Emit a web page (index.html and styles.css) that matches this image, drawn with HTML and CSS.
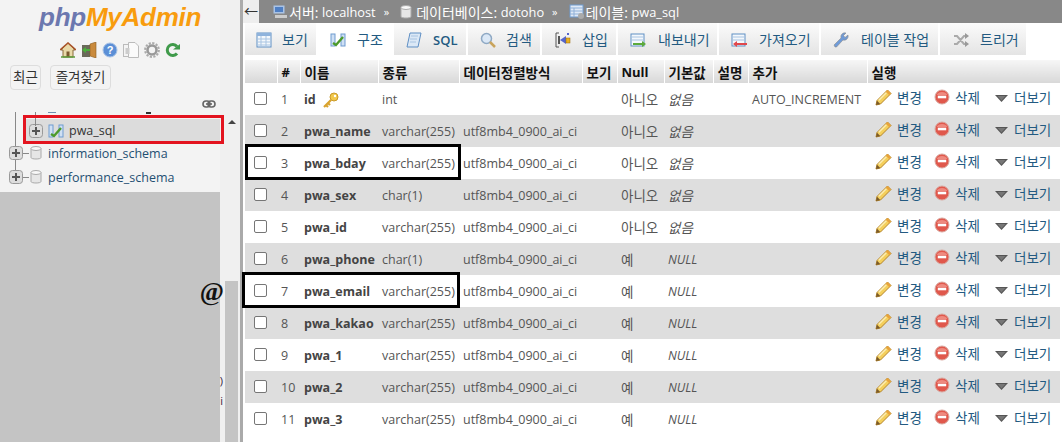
FILE: index.html
```html
<!DOCTYPE html>
<html lang="ko">
<head>
<meta charset="utf-8">
<title>phpMyAdmin</title>
<link rel="stylesheet" href="styles.css">
</head>
<body>
<svg class="defs" width="0" height="0">
  <defs>
    <symbol id="i-pencil" viewBox="0 0 17 17">
      <path d="M12.500 1 16 4.500 5.500 15 1 16 2 11.500Z" fill="#f4cf5c" stroke="#b5852a" stroke-width="1"/>
      <path d="M12.500 1 16 4.500 14.300 6.200 10.800 2.700Z" fill="#e8a33c"/>
      <path d="M3.800 11.200 11.300 3.800" stroke="#fcedb0" stroke-width="1.600"/>
      <path d="M2 11.800 1 16 5.200 15Z" fill="#7a5a2a"/>
    </symbol>
    <symbol id="i-del" viewBox="0 0 16 16">
      <circle cx="8" cy="8" r="7" fill="#e0584c" stroke="#d9a8a0" stroke-width="1"/>
      <path d="M2.500 6a6 5 0 0 1 11 0Z" fill="#ee8a7f"/>
      <rect x="3.800" y="6.700" width="8.400" height="2.600" fill="#fff"/>
    </symbol>
    <symbol id="i-more" viewBox="0 0 13 7">
      <path d="M0 0H13L6.500 7Z" fill="#555"/>
      <path d="M2.500 1H10.500L6.500 5.500Z" fill="#777"/>
    </symbol>
    <symbol id="i-plus" viewBox="0 0 14 14">
      <rect x=".5" y=".5" width="13" height="13" rx="3" fill="#ddd" stroke="#999"/>
      <path d="M3 7H11M7 3V11" stroke="#555" stroke-width="2"/>
    </symbol>
    <symbol id="i-db" viewBox="0 0 12 14">
      <path d="M1 2.500V11.500C1 13.500 11 13.500 11 11.500V2.500Z" fill="#e6e6e6" stroke="#aaa"/>
      <ellipse cx="6" cy="2.500" rx="5" ry="2" fill="#f8f8f8" stroke="#aaa"/>
    </symbol>
    <symbol id="i-struct" viewBox="0 0 16 16">
      <rect x="1" y="2" width="4" height="12" fill="#cfe0f4" stroke="#6f9bd0"/>
      <rect x="11" y="2" width="4" height="12" fill="#cfe0f4" stroke="#6f9bd0"/>
      <path d="M3 11 6 13 13 5" fill="none" stroke="#4c9a2a" stroke-width="2.400"/>
    </symbol>
  </defs>
</svg>

<div class="app">
  <aside class="side">
    <div class="panel">
      <div class="logo"><span class="php">php</span><span class="mya">MyAdmin</span></div>
      <div class="quick">
        <svg class="qi" viewBox="0 0 16 16"><path d="M8 1 1 8H3V15H13V8H15Z" fill="#e8d9a8" stroke="#8a6a3a"/><path d="M0 8 8 1 16 8" fill="none" stroke="#a9542a" stroke-width="1.600"/><rect x="6.500" y="9.500" width="3" height="5.500" fill="#7a5a30"/><path d="M1 15H15" stroke="#5a9a3a" stroke-width="1.500"/></svg>
        <svg class="qi" viewBox="0 0 16 16"><rect x="1" y="3" width="8" height="12" fill="#6a6a5a"/><path d="M9 2 15 0V16L9 14Z" fill="#c98a3c" stroke="#8a5a20" stroke-width=".6"/><path d="M1 8 5 5V7H9V9H5V11Z" fill="#4caf3c"/></svg>
        <svg class="qi" viewBox="0 0 16 16"><circle cx="8" cy="8" r="7" fill="#5b8fd6" stroke="#a9c3e6"/><text x="8" y="12" class="qmark">?</text></svg>
        <svg class="qi" viewBox="0 0 16 16"><rect x=".5" y="2.500" width="9" height="12" fill="#f4f4f4" stroke="#bbb"/><path d="M5.500 .5H12L15.500 4V15.500H5.500Z" fill="#fafafa" stroke="#bbb"/><rect x="2.500" y="6" width="4" height="6" fill="#ccc"/></svg>
        <svg class="qi" viewBox="0 0 16 16"><circle cx="8" cy="8" r="4.500" fill="none" stroke="#999" stroke-width="2.600"/><circle cx="8" cy="8" r="6.800" fill="none" stroke="#aaa" stroke-width="2.200" stroke-dasharray="2.200 1.360"/></svg>
        <svg class="qi" viewBox="0 0 16 16"><path d="M12 4.500A5.500 5.500 0 1 0 12 11.500" fill="none" stroke="#3f9a4a" stroke-width="3"/><path d="M8 7.500H15V2Z" fill="#3f9a4a"/></svg>
      </div>
      <div class="btns"><span class="btn btn-a">최근</span><span class="btn btn-b">즐겨찾기</span></div>
      <div class="link-row">
        <svg class="link" viewBox="0 0 14 8"><rect x="1" y="1" width="7" height="6" rx="3" fill="none" stroke="#666" stroke-width="1.600"/><rect x="6" y="1" width="7" height="6" rx="3" fill="none" stroke="#666" stroke-width="1.600"/><path d="M4 4H10" stroke="#666" stroke-width="1.600"/></svg>
      </div>
      <div class="tree-wrap">
        <ul class="tree">
          <li class="clip"><span class="clip-a"></span><span class="clip-b"></span></li>
          <li class="node node-sel">
            <svg class="plus" width="14" height="14"><use href="#i-plus"/></svg>
            <svg class="dbi" width="16" height="16"><use href="#i-struct"/></svg>
            <span>pwa_sql</span>
          </li>
          <li class="node node-db node-first">
            <svg class="plus" width="14" height="14"><use href="#i-plus"/></svg>
            <svg class="dbi" width="12" height="14"><use href="#i-db"/></svg>
            <span>information_schema</span>
          </li>
          <li class="node node-db">
            <svg class="plus" width="14" height="14"><use href="#i-plus"/></svg>
            <svg class="dbi" width="12" height="14"><use href="#i-db"/></svg>
            <span>performance_schema</span>
          </li>
        </ul>
      </div>
    </div>
    <div class="gray">
      <span class="at">@</span>
      <span class="frag frag1">)</span>
      <span class="frag frag2">i</span>
    </div>
    <div class="arrow-up"></div>
    <div class="redbox"></div>
  </aside>
  <div class="scroll"><div class="thumb"></div></div>

  <main class="main">
    <nav class="crumb">
      <span class="back">←</span>
      <span class="crumb-item"><svg class="ci" viewBox="0 0 16 16"><rect x="1" y="1" width="12" height="9" fill="#a9c3e6" stroke="#888"/><rect x="3" y="3" width="8" height="5" fill="#4f7fc4"/><rect x="3" y="11" width="12" height="3" fill="#ccc"/></svg>서버:&nbsp;<span class="lt">localhost</span></span>
      <span class="sep">»</span>
      <span class="crumb-item"><svg class="ci ci-db" width="12" height="14"><use href="#i-db"/></svg>데이터베이스:&nbsp;<span class="lt">dotoho</span></span>
      <span class="sep">»</span>
      <span class="crumb-item"><svg class="ci" viewBox="0 0 16 16"><rect x="1" y="1" width="13" height="12" fill="#dfe9f6" stroke="#6f9bd0"/><path d="M1 4H14M1 7H14M1 10H14M5 4V13" stroke="#8fb0d8"/><circle cx="12" cy="12" r="3" fill="#aaa"/></svg>테이블:&nbsp;<span class="lt">pwa_sql</span></span>
    </nav>
    <div class="tabs">
      <a class="tab t1"><svg class="ti" viewBox="0 0 16 16"><rect x="1" y="1" width="14" height="14" fill="#f4f8fc" stroke="#5f8fc4"/><rect x="1" y="1" width="14" height="3" fill="#8fb3dc"/><path d="M1 7H15M1 10H15M1 13H15M5 4V15M10 4V15" stroke="#a8c4e2"/></svg>보기</a>
      <a class="tab t2 active"><svg class="ti" width="16" height="16"><use href="#i-struct"/></svg>구조</a>
      <a class="tab t3"><svg class="ti" viewBox="0 0 16 16"><path d="M4 1H15L12 15H1Z" fill="#dbe8f6" stroke="#5f8fc4"/><path d="M5 4H12M4 7H11M4 10H10" stroke="#a8c4e2"/></svg><b>SQL</b></a>
      <a class="tab t4"><svg class="ti" viewBox="0 0 16 16"><circle cx="6.500" cy="6.500" r="5" fill="#dbe8f6" stroke="#8fa9c4" stroke-width="1.500"/><path d="M10 10 15 15" stroke="#c9a45c" stroke-width="2.500"/></svg>검색</a>
      <a class="tab t5"><svg class="ti" viewBox="0 0 16 16"><path d="M4 1H1V15H4" fill="none" stroke="#555"/><rect x="3" y="4" width="2" height="8" fill="#555"/><path d="M5 8 11 4V12Z" fill="#5566cc"/><rect x="11" y="6" width="4" height="5" fill="#e8b020" stroke="#996600" stroke-width=".5"/><rect x="12" y="1" width="2" height="2" fill="#5566cc"/></svg>삽입</a>
      <a class="tab t6"><svg class="ti" viewBox="0 0 16 16"><rect x="1" y="2" width="13" height="12" fill="#f4f8fc" stroke="#5f8fc4"/><path d="M1 5H14M1 8H14" stroke="#a8c4e2"/><path d="M3 11H12V9L16 12 12 15V13H3Z" fill="#5caa3c"/></svg>내보내기</a>
      <a class="tab t7"><svg class="ti" viewBox="0 0 16 16"><rect x="1" y="2" width="13" height="12" fill="#f4f8fc" stroke="#5f8fc4"/><path d="M1 5H14M1 8H14" stroke="#a8c4e2"/><path d="M16 11H6V9L2 12 6 15V13H16Z" fill="#e0484c"/></svg>가져오기</a>
      <a class="tab t8"><svg class="ti" viewBox="0 0 16 16"><path d="M2 15 1 13 8 6A4 4 0 0 1 13 1L10.500 3.500 12 5.500 15 3A4 4 0 0 1 10 8L3.500 15Z" fill="#6f9bd8" stroke="#8a8a8a" stroke-width=".6"/></svg>테이블 작업</a>
      <a class="tab t9"><svg class="ti" viewBox="0 0 16 16"><path d="M1 4H4L11 12H14M1 12H4L11 4H14" fill="none" stroke="#aaa" stroke-width="2"/><path d="M12 1 16 4 12 7ZM12 9 16 12 12 15Z" fill="#999"/></svg>트리거</a>
    </div>

    <table class="grid">
      <colgroup>
        <col class="c-check"><col class="c-num"><col class="c-name"><col class="c-type"><col class="c-coll"><col class="c-view"><col class="c-null"><col class="c-def"><col class="c-desc"><col class="c-extra"><col class="c-act">
      </colgroup>
      <thead>
        <tr><th></th><th class="lat">#</th><th>이름</th><th>종류</th><th>데이터정렬방식</th><th>보기</th><th class="lat">Null</th><th>기본값</th><th>설명</th><th>추가</th><th>실행</th></tr>
      </thead>
      <tbody>
        <tr><td><span class="cb"></span></td><td class="n">1</td><td class="nm">id <svg class="key" viewBox="0 0 16 16"><circle cx="11" cy="5" r="4" fill="#f2c84b" stroke="#c99a2a"/><circle cx="12" cy="4" r="1.200" fill="#fff"/><path d="M8 8 1 15M3 13 5 15M5 11 7 13" stroke="#d9a32e" stroke-width="2.200"/></svg></td><td>int</td><td></td><td></td><td class="ko">아니오</td><td class="i ko">없음</td><td></td><td>AUTO_INCREMENT</td><td class="act"><span class="a a1"><svg class="ai" width="17" height="17"><use href="#i-pencil"/></svg>변경</span><span class="a a2"><svg class="ad" width="16" height="16"><use href="#i-del"/></svg>삭제</span><span class="a"><svg class="am" width="13" height="7"><use href="#i-more"/></svg>더보기</span></td></tr>
        <tr><td><span class="cb"></span></td><td class="n">2</td><td class="nm">pwa_name</td><td>varchar(255)</td><td>utf8mb4_0900_ai_ci</td><td></td><td class="ko">아니오</td><td class="i ko">없음</td><td></td><td></td><td class="act"><span class="a a1"><svg class="ai" width="17" height="17"><use href="#i-pencil"/></svg>변경</span><span class="a a2"><svg class="ad" width="16" height="16"><use href="#i-del"/></svg>삭제</span><span class="a"><svg class="am" width="13" height="7"><use href="#i-more"/></svg>더보기</span></td></tr>
        <tr><td><span class="cb"></span></td><td class="n">3</td><td class="nm">pwa_bday</td><td>varchar(255)</td><td>utf8mb4_0900_ai_ci</td><td></td><td class="ko">아니오</td><td class="i ko">없음</td><td></td><td></td><td class="act"><span class="a a1"><svg class="ai" width="17" height="17"><use href="#i-pencil"/></svg>변경</span><span class="a a2"><svg class="ad" width="16" height="16"><use href="#i-del"/></svg>삭제</span><span class="a"><svg class="am" width="13" height="7"><use href="#i-more"/></svg>더보기</span></td></tr>
        <tr><td><span class="cb"></span></td><td class="n">4</td><td class="nm">pwa_sex</td><td>char(1)</td><td>utf8mb4_0900_ai_ci</td><td></td><td class="ko">아니오</td><td class="i ko">없음</td><td></td><td></td><td class="act"><span class="a a1"><svg class="ai" width="17" height="17"><use href="#i-pencil"/></svg>변경</span><span class="a a2"><svg class="ad" width="16" height="16"><use href="#i-del"/></svg>삭제</span><span class="a"><svg class="am" width="13" height="7"><use href="#i-more"/></svg>더보기</span></td></tr>
        <tr><td><span class="cb"></span></td><td class="n">5</td><td class="nm">pwa_id</td><td>varchar(255)</td><td>utf8mb4_0900_ai_ci</td><td></td><td class="ko">아니오</td><td class="i ko">없음</td><td></td><td></td><td class="act"><span class="a a1"><svg class="ai" width="17" height="17"><use href="#i-pencil"/></svg>변경</span><span class="a a2"><svg class="ad" width="16" height="16"><use href="#i-del"/></svg>삭제</span><span class="a"><svg class="am" width="13" height="7"><use href="#i-more"/></svg>더보기</span></td></tr>
        <tr><td><span class="cb"></span></td><td class="n">6</td><td class="nm">pwa_phone</td><td>char(1)</td><td>utf8mb4_0900_ai_ci</td><td></td><td class="ko">예</td><td class="i">NULL</td><td></td><td></td><td class="act"><span class="a a1"><svg class="ai" width="17" height="17"><use href="#i-pencil"/></svg>변경</span><span class="a a2"><svg class="ad" width="16" height="16"><use href="#i-del"/></svg>삭제</span><span class="a"><svg class="am" width="13" height="7"><use href="#i-more"/></svg>더보기</span></td></tr>
        <tr><td><span class="cb"></span></td><td class="n">7</td><td class="nm">pwa_email</td><td>varchar(255)</td><td>utf8mb4_0900_ai_ci</td><td></td><td class="ko">예</td><td class="i">NULL</td><td></td><td></td><td class="act"><span class="a a1"><svg class="ai" width="17" height="17"><use href="#i-pencil"/></svg>변경</span><span class="a a2"><svg class="ad" width="16" height="16"><use href="#i-del"/></svg>삭제</span><span class="a"><svg class="am" width="13" height="7"><use href="#i-more"/></svg>더보기</span></td></tr>
        <tr><td><span class="cb"></span></td><td class="n">8</td><td class="nm">pwa_kakao</td><td>varchar(255)</td><td>utf8mb4_0900_ai_ci</td><td></td><td class="ko">예</td><td class="i">NULL</td><td></td><td></td><td class="act"><span class="a a1"><svg class="ai" width="17" height="17"><use href="#i-pencil"/></svg>변경</span><span class="a a2"><svg class="ad" width="16" height="16"><use href="#i-del"/></svg>삭제</span><span class="a"><svg class="am" width="13" height="7"><use href="#i-more"/></svg>더보기</span></td></tr>
        <tr><td><span class="cb"></span></td><td class="n">9</td><td class="nm">pwa_1</td><td>varchar(255)</td><td>utf8mb4_0900_ai_ci</td><td></td><td class="ko">예</td><td class="i">NULL</td><td></td><td></td><td class="act"><span class="a a1"><svg class="ai" width="17" height="17"><use href="#i-pencil"/></svg>변경</span><span class="a a2"><svg class="ad" width="16" height="16"><use href="#i-del"/></svg>삭제</span><span class="a"><svg class="am" width="13" height="7"><use href="#i-more"/></svg>더보기</span></td></tr>
        <tr><td><span class="cb"></span></td><td class="n">10</td><td class="nm">pwa_2</td><td>varchar(255)</td><td>utf8mb4_0900_ai_ci</td><td></td><td class="ko">예</td><td class="i">NULL</td><td></td><td></td><td class="act"><span class="a a1"><svg class="ai" width="17" height="17"><use href="#i-pencil"/></svg>변경</span><span class="a a2"><svg class="ad" width="16" height="16"><use href="#i-del"/></svg>삭제</span><span class="a"><svg class="am" width="13" height="7"><use href="#i-more"/></svg>더보기</span></td></tr>
        <tr><td><span class="cb"></span></td><td class="n">11</td><td class="nm">pwa_3</td><td>varchar(255)</td><td>utf8mb4_0900_ai_ci</td><td></td><td class="ko">예</td><td class="i">NULL</td><td></td><td></td><td class="act"><span class="a a1"><svg class="ai" width="17" height="17"><use href="#i-pencil"/></svg>변경</span><span class="a a2"><svg class="ad" width="16" height="16"><use href="#i-del"/></svg>삭제</span><span class="a"><svg class="am" width="13" height="7"><use href="#i-more"/></svg>더보기</span></td></tr>
      </tbody>
    </table>
    <div class="mark mark1"></div>
    <div class="mark mark2"></div>
  </main>
</div>
</body>
</html>
```
FILE: styles.css
```css
* { box-sizing: border-box; }
html, body { margin: 0; padding: 0; height: 442px; overflow: hidden; background: #fff; }
body { font-family: "Open Sans", "Noto Sans CJK KR", sans-serif; font-size: 12.500px; color: #444; }
.defs { position: absolute; }
.app { display: flex; height: 442px; }

/* sidebar */
.side { position: relative; z-index: 1; width: 220px; flex: none; display: flex; flex-direction: column; }
.panel { height: 192px; background: #f3f3f3; display: flex; flex-direction: column; }
.logo { height: 40px; padding-left: 39px; font: italic bold 26px/34px "Liberation Sans", sans-serif; letter-spacing: -.25px; white-space: nowrap; }
.php { color: #6c78af; }
.mya { color: #f89c0e; }
.quick { display: flex; gap: 5px; padding-left: 60px; height: 18px; margin-top: 2px; }
.qi { width: 16px; height: 16px; flex: none; }
.qmark { font: bold 11px "Liberation Sans", sans-serif; fill: #fff; text-anchor: middle; }
.btns { display: flex; gap: 9px; padding-left: 10px; margin-top: 5px; }
.btn { height: 25px; border: 1px solid #ddd; border-radius: 4px; background: #f3f3f3; font-size: 13.500px; line-height: 22px; color: #333; text-align: center; white-space: nowrap; }
.btn-a { width: 31px; }
.btn-b { width: 61px; }
.link-row { display: flex; justify-content: flex-end; padding-right: 4px; margin-top: 10px; height: 8px; }
.link { width: 14px; height: 8px; }
.tree-wrap { flex: 1; margin-top: 4px; }
.tree { list-style: none; margin: 0; padding: 0; position: relative; }
.tree::before { content: ""; position: absolute; left: 15px; top: 0; height: 64px; width: 1px; background: #888; }
.clip { position: relative; height: 3px; }
.clip-a { position: absolute; left: 48px; top: 0; width: 8px; height: 1px; background: #6f8fb0; }
.clip-b { position: absolute; left: 146px; top: 0; width: 5px; height: 2px; background: #333; }
.node { display: flex; align-items: center; height: 24px; color: #1f4f72; font-size: 12.500px; position: relative; white-space: nowrap; }
.node-sel { margin: 4px 0 0 26px; height: 23px; padding-left: 3px; background: #dcdcdc; color: #333; width: 194px; }
.node-sel::before { content: ""; position: absolute; left: 9px; top: -7px; height: 14px; width: 1px; background: #888; }
.node-first { margin-top: -1px; }
.node-db { padding-left: 9px; width: 220px; }
.node-db::after { content: ""; position: absolute; left: 23px; top: 12px; width: 6px; height: 1px; background: #888; }
.node-sel .dbi { margin: 0 5px 0 5px; }
.node-db .dbi { margin: 0 6px 0 7px; }
.plus, .dbi { flex: none; }
.arrow-up { position: absolute; left: 228px; top: 120px; width: 0; height: 0; border: 4px solid transparent; border-bottom: 4px solid #444; border-top: 0; }
.gray { position: relative; flex: 1; background: #c4c4c4; }
.at { position: absolute; right: -4px; top: 86px; font: bold 26px/28px "Liberation Serif", serif; color: #111; }
.frag { position: absolute; right: -3px; color: #302040; font-size: 11px; line-height: 12px; }
.frag1 { top: 183px; }
.frag2 { top: 203px; }
.redbox { position: absolute; left: 23px; top: 115px; width: 201px; height: 29px; border: 3px solid #e3141f; z-index: 2; }

.scroll { position: relative; width: 23px; flex: none; background: #f0f0f0; border-right: 3px solid #aaa; }
.thumb { position: absolute; left: 5px; right: 2px; top: 281px; bottom: 0; background: #c4c4c4; }

/* main */
.main { position: relative; flex: 1; min-width: 0; }
.crumb { display: flex; align-items: center; height: 23px; background: #888; color: #fff; font-size: 14px; white-space: nowrap; }
.lt { font-size: 12.800px; }
.back { width: 16px; height: 23px; background: #eee; color: #333; text-align: center; line-height: 22px; margin-right: 13px; flex: none; }
.crumb-item { display: inline-flex; align-items: center; }
.ci { width: 16px; height: 16px; flex: none; margin-right: 1px; }
.ci-db { width: 12px; height: 14px; margin-right: 4px; }
.sep { margin: 0 11px 0 8px; font-size: 11px; }
.tabs { display: flex; height: 32px; background: #fff; padding-left: 2px; }
.tab { display: flex; align-items: center; height: 32px; padding-top: 2px; background: linear-gradient(#fbfbfb, #e4e4e4); border-right: 2px solid #fff; color: #235a81; font-size: 14px; line-height: 30px; white-space: nowrap; }
.tab b { font-weight: 600; font-size: 13px; }
.ti { width: 16px; height: 16px; flex: none; margin-right: 11px; }
.tab.active { background: #fff; }
.t1 { width: 73px; padding-left: 11px; }
.t1 .ti { margin-right: 10px; }
.t2 { width: 76px; padding-left: 12px; }
.t3 { width: 74px; padding-left: 12px; }
.t4 { width: 74px; padding-left: 12px; }
.t4 .ti { margin-right: 10px; }
.t5 { width: 76px; padding-left: 13px; }
.t6 { width: 101px; padding-left: 12px; }
.t6 .ti, .t7 .ti, .t8 .ti { margin-right: 12px; }
.t7 { width: 102px; padding-left: 12px; }
.t8 { width: 119px; padding-left: 12px; }
.t9 { width: 88px; padding-left: 13px; }

/* table */
.grid { border-collapse: collapse; table-layout: fixed; width: 815px; margin: 5px 0 0 2px; }
.c-check { width: 32px; } .c-num { width: 23px; } .c-name { width: 78px; } .c-type { width: 81px; }
.c-coll { width: 123px; } .c-view { width: 35px; } .c-null { width: 47px; } .c-def { width: 49px; }
.c-desc { width: 35px; } .c-extra { width: 119px; } .c-act { width: 193px; }
th { height: 23px; padding: 0 4px; text-align: left; font-size: 13.500px; font-weight: 700; color: #111; background: linear-gradient(#f6f6f6, #d8d8d8); border-right: 1px solid #fff; white-space: nowrap; }
th.lat { font-size: 13px; }
td { height: 32px; padding: 0 4px; font-size: 12.500px; color: #555; white-space: nowrap; overflow: visible; }
td.ko { font-size: 13.500px; }
tbody tr:nth-child(even) td { background: #dedede; }
tbody tr { height: 32px; }
.cb { display: block; width: 13px; height: 13px; margin-left: 5px; margin-top: -2px; border: 1px solid #767676; border-radius: 2px; background: #fff; }
.n { color: #555; }
.nm { font-weight: 700; color: #444; }
.key { width: 16px; height: 16px; vertical-align: -4px; margin-left: 4px; }
.i { font-style: italic; }
td.act { padding-left: 8px; font-size: 13.500px; }
.a { display: inline-flex; align-items: center; color: #235a81; vertical-align: middle; height: 20px; margin-top: -6px; }
.a1 { width: 59px; }
.a2 { width: 60px; }
.ai { margin-right: 5px; flex: none; }
.ad { margin-right: 5px; flex: none; }
.am { margin: 2px 6px 0 1px; flex: none; }

.mark { position: absolute; border: 3px solid #000; }
.mark1 { left: 2px; top: 144px; width: 216px; height: 36px; }
.mark2 { left: -1px; top: 272px; width: 218px; height: 36px; }
```
